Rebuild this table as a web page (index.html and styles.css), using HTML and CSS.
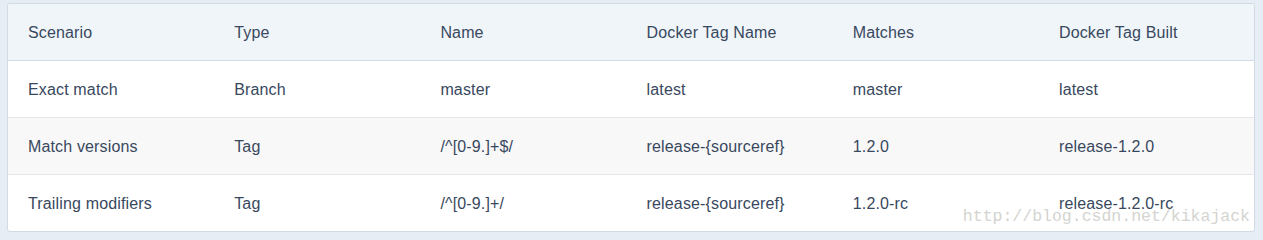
FILE: index.html
```html
<!DOCTYPE html>
<html>
<head>
<meta charset="utf-8">
<link rel="stylesheet" href="styles.css">
</head>
<body>
<div class="card">
  <div class="row head">
    <div class="cell">Scenario</div>
    <div class="cell">Type</div>
    <div class="cell">Name</div>
    <div class="cell">Docker Tag Name</div>
    <div class="cell">Matches</div>
    <div class="cell">Docker Tag Built</div>
  </div>
  <div class="row">
    <div class="cell">Exact match</div>
    <div class="cell">Branch</div>
    <div class="cell">master</div>
    <div class="cell">latest</div>
    <div class="cell">master</div>
    <div class="cell">latest</div>
  </div>
  <div class="row alt">
    <div class="cell">Match versions</div>
    <div class="cell">Tag</div>
    <div class="cell">/^[0-9.]+$/</div>
    <div class="cell">release-{sourceref}</div>
    <div class="cell">1.2.0</div>
    <div class="cell">release-1.2.0</div>
  </div>
  <div class="row last">
    <div class="cell">Trailing modifiers</div>
    <div class="cell">Tag</div>
    <div class="cell">/^[0-9.]+/</div>
    <div class="cell">release-{sourceref}</div>
    <div class="cell">1.2.0-rc</div>
    <div class="cell">release-1.2.0-rc</div>
  </div>
  <div class="watermark">http://blog.csdn.net/kikajack</div>
</div>
</body>
</html>
```

FILE: styles.css
```css
html, body {
  margin: 0;
  padding: 0;
  background: #e7edf5;
  height: 240px;
  overflow: hidden;
}
body {
  padding: 3px 0 0 7px;
  font-family: "Liberation Sans", Arial, sans-serif;
  font-size: 16px;
  letter-spacing: 0.15px;
  color: #38485e;
}
.card {
  position: relative;
  width: 1246px;
  background: #fff;
  border: 1px solid #d2dae4;
  border-radius: 3px;
  overflow: hidden;
}
.row {
  box-sizing: border-box;
  display: grid;
  grid-template-columns: 206.2px 206.2px 206.2px 206.2px 206.2px 1fr;
  padding: 2px 0 0 20px;
  height: 57px;
  align-items: center;
  border-bottom: 1px solid #e4e8ec;
}
.row.head {
  background: #f0f5fa;
  border-bottom: 1px solid #d3dbe6;
}
.row.alt {
  background: #f8f8f8;
}
.row.last {
  height: 56px;
  border-bottom: none;
}
.cell {
  white-space: nowrap;
}
.watermark {
  position: absolute;
  right: 4px;
  bottom: 5px;
  font-family: "Liberation Mono", "DejaVu Sans Mono", monospace;
  font-size: 16.5px;
  letter-spacing: 0;
  color: #d4d4d0;
}
```
